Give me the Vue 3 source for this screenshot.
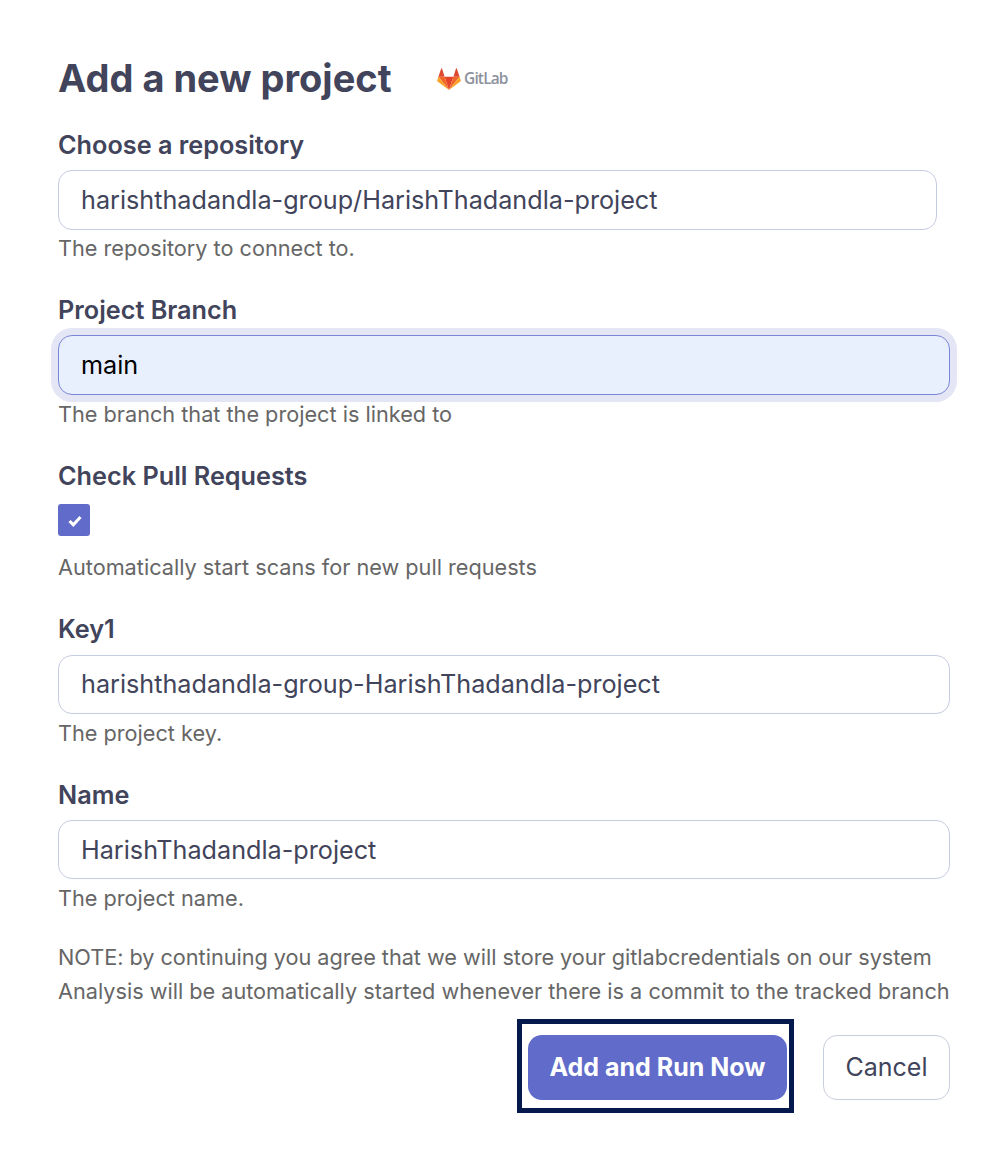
<script setup>
const note = 'NOTE: by continuing you agree that we will store your gitlabcredentials on our system'
const fields = [
  { label: 'Choose a repository', value: 'harishthadandla-group/HarishThadandla-project', help: 'The repository to connect to.', cls: 'repo' },
  { label: 'Project Branch', value: 'main', help: 'The branch that the project is linked to', cls: 'branch' },
  { label: 'Check Pull Requests', help: 'Automatically start scans for new pull requests', cls: 'check', checkbox: true },
  { label: 'Key1', value: 'harishthadandla-group-HarishThadandla-project', help: 'The project key.', cls: 'key' },
  { label: 'Name', value: 'HarishThadandla-project', help: 'The project name.', cls: 'name' },
]
</script>

<template>
  <main class="page">
    <header class="head">
      <h1>Add a new project</h1>
      <div class="brand">
        <svg width="24" height="22" viewBox="0 0 24 22">
          <path fill="#e24329" d="M12 22 7.600 8.800h8.800z" />
          <path fill="#f0662b" d="M12 22 7.600 8.800H1.400zM12 22l4.400-13.200h6.200z" />
          <path fill="#fca326" d="M1.400 8.800.2 12.500q-.2.7.4 1.100L12 22zM22.600 8.800l1.200 3.700q.2.700-.4 1.100L12 22z" />
          <path fill="#dc4a30" d="M1.400 8.800h6.200L5 .5q-.4-.6-.8 0zM22.600 8.800h-6.200L19 .5q.4-.6.8 0z" />
        </svg>
        <span>GitLab</span>
      </div>
    </header>
    <section v-for="f in fields" :key="f.label" class="field" :class="f.cls">
      <label>{{ f.label }}</label>
      <div v-if="f.checkbox" class="box">
        <svg width="14" height="12" viewBox="0 0 14 12"><path d="M1.500 6 5.300 9.700 12.500 2" fill="none" stroke="#fff" stroke-width="3.100" /></svg>
      </div>
      <div v-else class="input"><span>{{ f.value }}</span></div>
      <p>{{ f.help }}</p>
    </section>
    <div class="note">
      <div class="terms">{{ note }}</div>
      <div>Analysis will be automatically started whenever there is a commit to the tracked branch</div>
    </div>
    <footer>
      <div class="ring"><button class="primary">Add and Run Now</button></div>
      <button class="cancel">Cancel</button>
    </footer>
  </main>
</template>

<style>
body { background: #fff; }
</style>
<style scoped>
* { box-sizing: border-box; }
.page { width: 1008px; height: 1160px; padding: 54px 58px 0; font-family: Inter, sans-serif; color: #41445a; white-space: nowrap; background: #fff; overflow: hidden; }
.head { display: flex; height: 74px; }
h1 { margin: 0; width: 379px; font-size: 38px; line-height: 48px; font-weight: 700; }
.brand { display: flex; height: 50px; align-items: center; gap: 3px; color: #8c929d; font-family: "Open Sans", sans-serif; font-size: 15.500px; font-weight: 600; letter-spacing: -0.85px; }
.brand span { padding-bottom: 2px; }
.field { display: flex; flex-direction: column; height: 166px; }
.repo { height: 165px; }
.check { height: 153px; }
.name { height: 162px; }
label { height: 42px; line-height: 34px; font-size: 25.250px; font-weight: 600; }
.input { height: 60px; flex: none; border: 1px solid #c5cbdf; border-radius: 14px; padding: 0 22px; font-size: 25.200px; line-height: 58px; background: #fff; }
.repo .input { width: 879px; }
.repo p { line-height: 36px; }
.branch .input { background: #e8f0fe; border-color: #7b85d8; box-shadow: 0 0 0 7px #e4e6f5; color: #000; }
.key label { height: 43px; }
.key .input { height: 59px; line-height: 56px; }
.name .input { height: 59px; line-height: 58px; }
p { margin: 0; color: #666; font-size: 21.680px; line-height: 38px; }
.box { width: 32px; height: 32px; margin: 3px 0 12px; padding: 2px 0 0 1px; background: #606bca; border-radius: 3px; display: flex; align-items: center; justify-content: center; }
.note { color: #666; font-size: 21.680px; line-height: 34px; }
.terms { letter-spacing: -0.025px; }
footer { display: flex; justify-content: flex-end; align-items: flex-start; margin-top: 11px; gap: 29px; }
.ring { width: 277px; height: 94px; border: 5px solid #06194d; padding: 11px 2px 8px 6px; }
button { font-family: inherit; font-size: 25px; padding: 0 0 2px; height: 65px; border-radius: 14px; }
.primary { display: block; width: 259px; border: 0; background: #606bca; color: #fff; font-weight: 700; }
.cancel { width: 127px; margin-top: 16px; background: #fff; border: 1px solid #c9cedd; color: #41445a; }
</style>
